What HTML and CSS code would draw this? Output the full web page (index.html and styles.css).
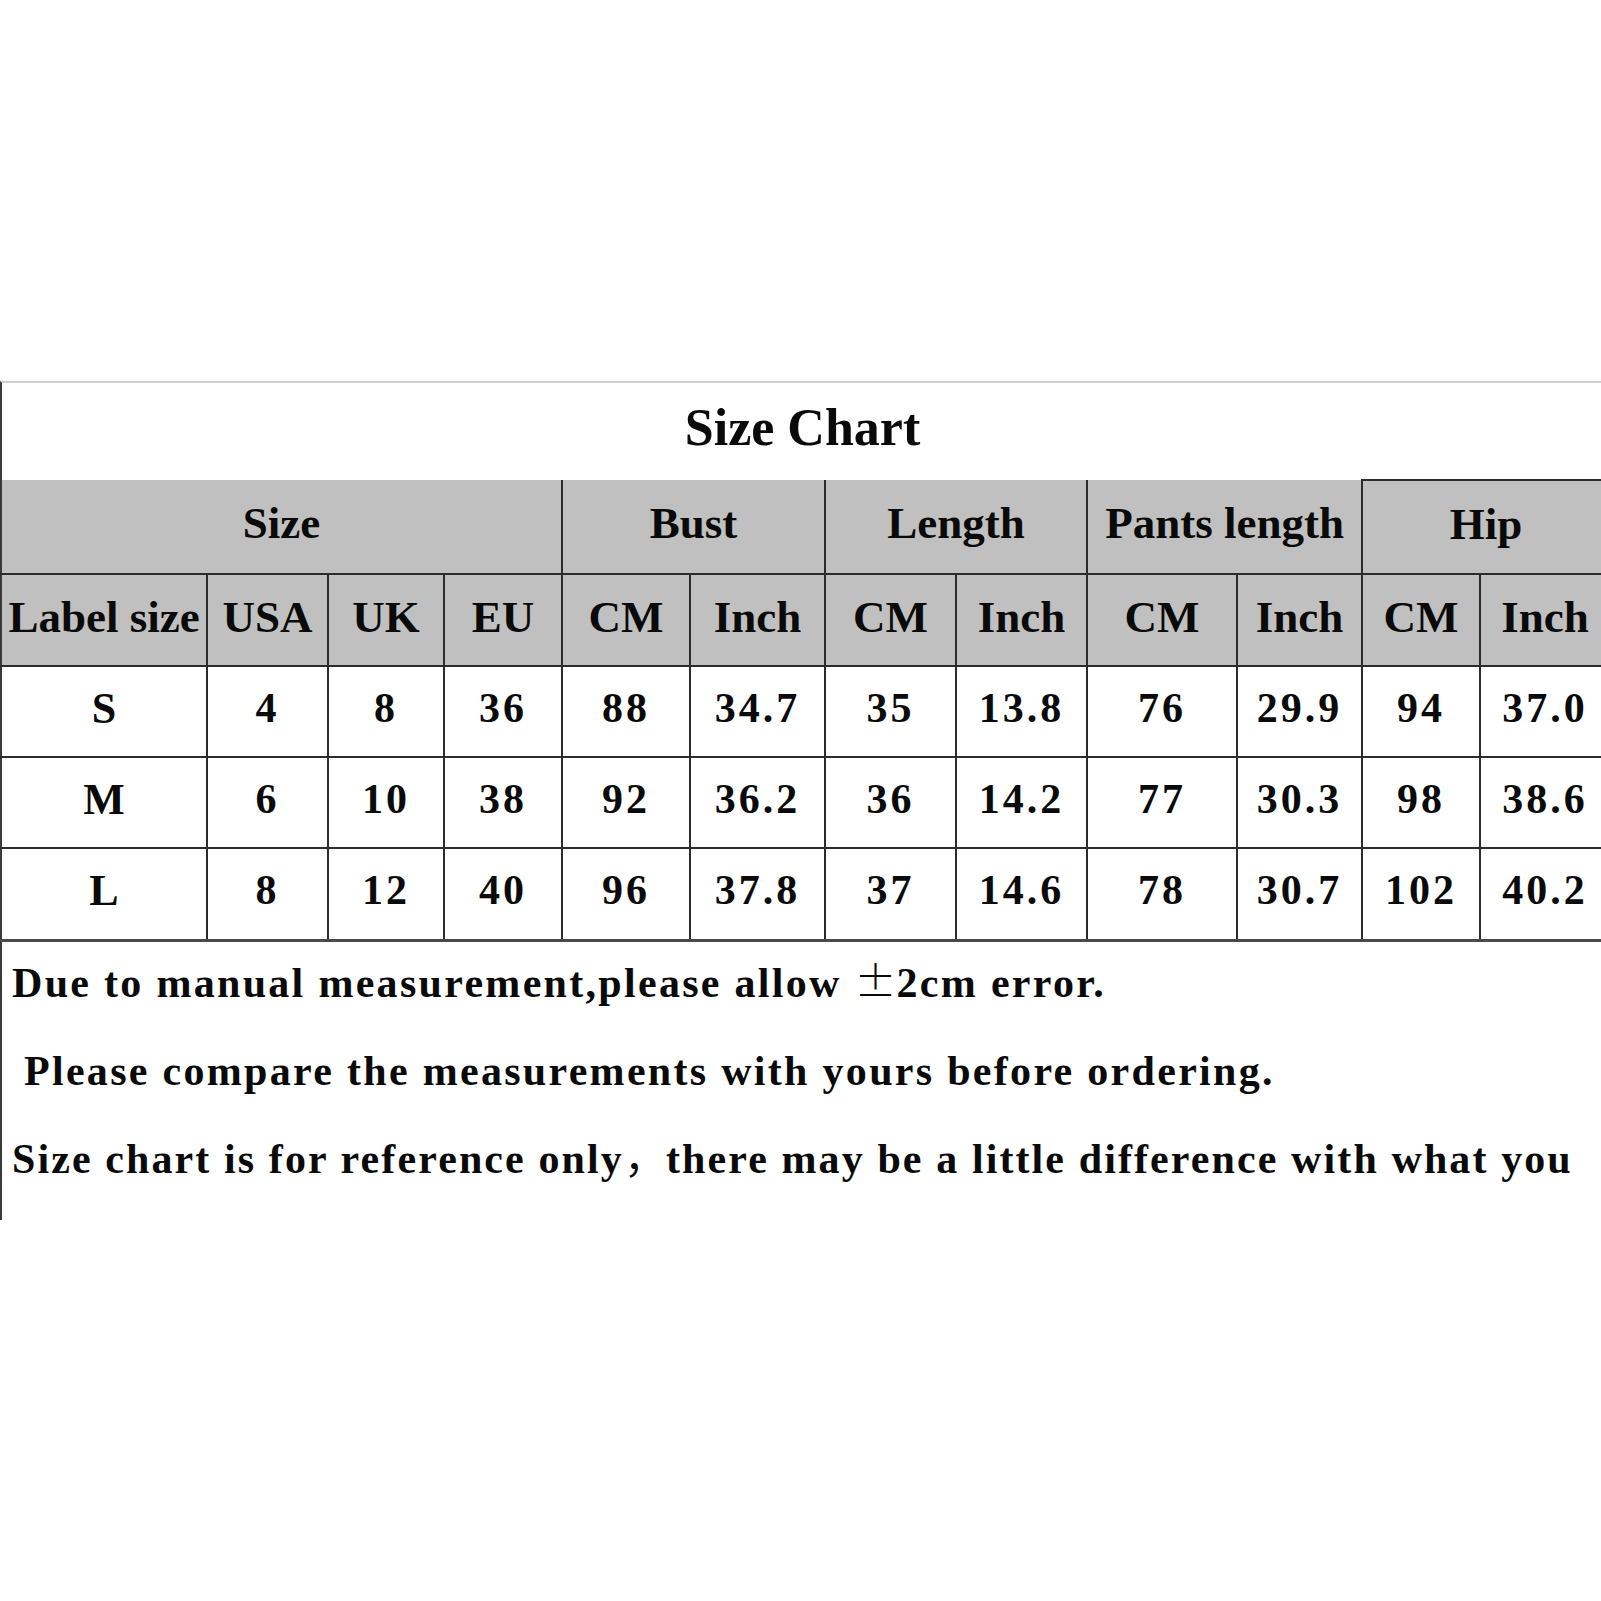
FILE: index.html
```html
<!DOCTYPE html>
<html>
<head>
<meta charset="utf-8">
<title>Size Chart</title>
<link rel="stylesheet" href="styles.css">
</head>
<body>
<div class="sheet">
  <div class="title">Size Chart</div>
  <table class="chart">
    <colgroup>
      <col class="c-label"><col class="c-usa"><col class="c-uk"><col class="c-eu">
      <col class="c-bcm"><col class="c-bin"><col class="c-lcm"><col class="c-lin">
      <col class="c-pcm"><col class="c-pin"><col class="c-hcm"><col class="c-hin">
    </colgroup>
    <tr class="head1">
      <th colspan="4">Size</th>
      <th colspan="2">Bust</th>
      <th colspan="2">Length</th>
      <th colspan="2">Pants length</th>
      <th colspan="2" class="hip">Hip</th>
    </tr>
    <tr class="head2">
      <th>Label size</th><th>USA</th><th>UK</th><th>EU</th>
      <th>CM</th><th>Inch</th><th>CM</th><th>Inch</th>
      <th>CM</th><th>Inch</th><th>CM</th><th>Inch</th>
    </tr>
    <tr class="row">
      <td class="size">S</td><td>4</td><td>8</td><td>36</td>
      <td>88</td><td>34.7</td><td>35</td><td>13.8</td>
      <td>76</td><td>29.9</td><td>94</td><td>37.0</td>
    </tr>
    <tr class="row">
      <td class="size">M</td><td>6</td><td>10</td><td>38</td>
      <td>92</td><td>36.2</td><td>36</td><td>14.2</td>
      <td>77</td><td>30.3</td><td>98</td><td>38.6</td>
    </tr>
    <tr class="row last">
      <td class="size">L</td><td>8</td><td>12</td><td>40</td>
      <td>96</td><td>37.8</td><td>37</td><td>14.6</td>
      <td>78</td><td>30.7</td><td>102</td><td>40.2</td>
    </tr>
  </table>
  <div class="notes">
    <p class="note">Due to manual measurement,please allow <span class="pm">±</span>2cm error.</p>
    <p class="note indent">Please compare the measurements with yours before ordering.</p>
    <p class="note wide">Size chart is for reference only<span class="cjk">，</span>there may be a little difference with what you</p>
  </div>
</div>
</body>
</html>
```
FILE: styles.css
```css
html, body {
  margin: 0;
  padding: 0;
  background: #ffffff;
  overflow: hidden;
}
body {
  width: 1601px;
  height: 1601px;
  color: #0a0a0a;
  font-family: "Liberation Serif", "Times New Roman", serif;
}
.sheet {
  margin-top: 381px;
  width: 1640px;
  border-top: 2px solid #cfcfcf;
  border-left: 2px solid #3a3a3a;
}
.title {
  height: 96px;
  line-height: 90px;
  text-align: center;
  width: 1601px;
  font-size: 52px;
  font-weight: bold;
}
.chart {
  border-collapse: collapse;
  table-layout: fixed;
  width: 1609px;
  margin-left: -2px;
}
.c-label { width: 206px; }
.c-usa { width: 121px; }
.c-uk { width: 116px; }
.c-eu { width: 118px; }
.c-bcm { width: 128px; }
.c-bin { width: 135px; }
.c-lcm { width: 131px; }
.c-lin { width: 131px; }
.c-pcm { width: 150px; }
.c-pin { width: 125px; }
.c-hcm { width: 118px; }
.c-hin { width: 130px; }
.chart th, .chart td {
  border: 2px solid #2c2c2c;
  padding: 0 0 7px 0;
  text-align: center;
  vertical-align: middle;
  white-space: nowrap;
  overflow: visible;
}
.chart th {
  background: #c0c0c0;
  font-size: 45px;
  font-weight: bold;
}
.head1 th {
  border-top: none;
}
.head1 th.hip {
  border-top: 2px solid #2c2c2c;
}
.chart tr > :first-child {
  border-left: 2px solid #3a3a3a;
}
.head1 { height: 94px; }
.head2 { height: 92px; }
.row { height: 91px; }
.row.last { height: 92px; }
.row.last td {
  border-bottom: 3px solid #4a4a4a;
}
.chart td {
  font-size: 42px;
  font-weight: bold;
  letter-spacing: 3px;
}
.chart td.size {
  letter-spacing: 0;
  font-size: 44px;
}
.notes {
  margin-top: -3px;
  padding: 0 0 17px 10px;
}
.note {
  margin: 0;
  height: 88px;
  line-height: 88px;
  font-size: 42px;
  font-weight: bold;
  letter-spacing: 2.3px;
  white-space: nowrap;
}
.note.indent {
  padding-left: 12px;
}
.note.wide {
  letter-spacing: 2.1px;
}
.pm {
  font-family: "Noto Sans CJK SC", sans-serif;
  font-weight: 300;
  letter-spacing: 0;
  line-height: 0;
}
.cjk {
  font-family: "Noto Sans CJK SC", sans-serif;
  font-weight: normal;
  letter-spacing: 0;
  line-height: 0;
}
```
